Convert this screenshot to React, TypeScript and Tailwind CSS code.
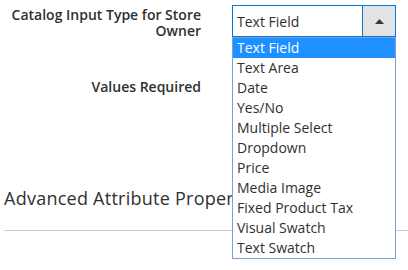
import React from "react";

const options = [
  "Text Field",
  "Text Area",
  "Date",
  "Yes/No",
  "Multiple Select",
  "Dropdown",
  "Price",
  "Media Image",
  "Fixed Product Tax",
  "Visual Swatch",
  "Text Swatch",
];

export default function App() {
  return (
    <div
      className="relative w-[408px] h-[270px] overflow-hidden bg-white text-[#303030]"
      style={{ fontFamily: '"Open Sans", "Liberation Sans", sans-serif' }}
    >
      <div className="flex pt-[5px]">
        <div className="w-[201px] pt-[2px] text-right text-[14px] leading-[16px] font-semibold text-[#303030]">
          Catalog Input Type for Store Owner
        </div>
        <div className="ml-[31px] flex h-[32px] w-[164px] border border-[#007bdb] bg-white">
          <div className="flex flex-1 items-center pl-[4px] text-[14px] text-[#303030]">
            Text Field
          </div>
          <div className="flex w-[33px] items-center justify-center border-l border-[#007bdb] bg-[#e3e3e3]">
            <svg width="9" height="5" viewBox="0 0 9 5">
              <polygon points="0,5 9,5 4.5,0" fill="#41362f" />
            </svg>
          </div>
        </div>
      </div>
      <div className="flex pt-[40px]">
        <div className="w-[201px] text-right text-[14px] leading-[16px] font-semibold text-[#303030]">
          Values Required
        </div>
      </div>
      <div className="pl-[4px] pt-[91px] text-[18px] leading-[24px] tracking-[0.25px] text-[#303030]">
        Advanced Attribute Properties
      </div>
      <div className="ml-[4px] mt-[20px] h-px bg-[#cccccc]" />

      <div className="absolute left-[232px] top-[37px] w-[164px] border border-[#7b9fd9] bg-white">
        {options.map((o, i) => (
          <div
            key={o}
            className={
              "h-[20px] pl-[4px] text-[14px] leading-[20px] " +
              (i === 0 ? "bg-[#1e90ff] text-white" : "text-[#303030]")
            }
          >
            {o}
          </div>
        ))}
      </div>
    </div>
  );
}
